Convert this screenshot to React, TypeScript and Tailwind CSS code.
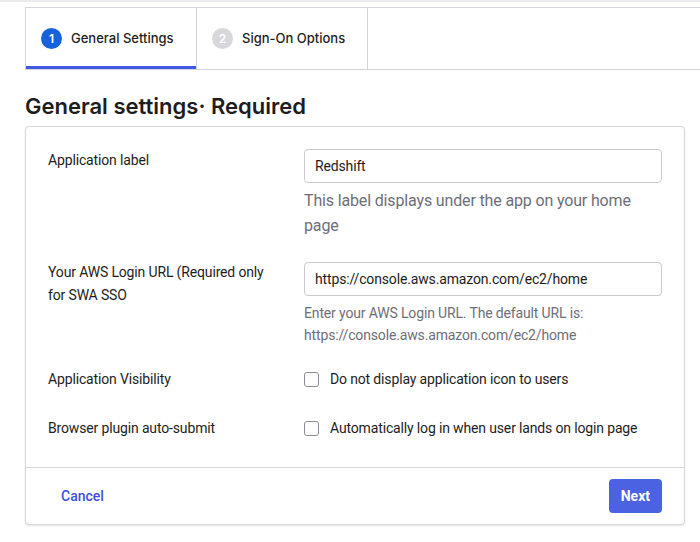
import React from 'react';

const inter = { fontFamily: 'Inter, "Noto Sans", sans-serif' };
const roboto = { fontFamily: 'Roboto, "Liberation Sans", sans-serif' };

const Tab: React.FC<{ n: number; label: string; active?: boolean }> = ({ n, label, active }) => (
  <div className="relative flex h-full w-[171px] items-center gap-[9px] border-r border-[#d4d4d8] pl-[15px]">
    <span
      className={
        active
          ? 'flex h-[21px] w-[21px] items-center justify-center rounded-full bg-[#1662dd] text-[12px] font-semibold text-white'
          : 'flex h-[21px] w-[21px] items-center justify-center rounded-full bg-[#d7d7dc] text-[12px] font-semibold text-white'
      }
    >
      {n}
    </span>
    <span className="text-[13px] font-medium text-[#1d1d21]">{label}</span>
    {active && <span className="absolute bottom-0 left-0 right-0 h-[3px] bg-[#3f59e4]" />}
  </div>
);

const Checkbox: React.FC = () => (
  <span className="block h-[15px] w-[15px] shrink-0 rounded-[3px] border border-[#8c8c96] bg-white" />
);

export default function App() {
  return (
    <div className="min-h-screen w-[700px] bg-white" style={inter}>
      <div className="h-[2px] bg-[#ebebed]" />

      {/* Tabs */}
      <div className="ml-[25px] mt-[5px] flex h-[63px] border-y border-l border-[#d4d4d8]">
        <Tab n={1} label="General Settings" active />
        <Tab n={2} label="Sign-On Options" />
      </div>

      <h1 className="ml-[25px] mt-[21px] text-[22px] font-semibold leading-[30px] text-[#1d1d21]">
        General settings· Required
      </h1>

      {/* Card */}
      <div
        className="ml-[25px] mt-[5px] w-[660px] rounded-[4px] border border-[#d7d7dc] bg-white shadow-[0_1px_2px_rgba(0,0,0,0.12)]"
        style={roboto}
      >
        <div className="px-[22px] pb-[27px] pt-[22px] text-[14px] tracking-[-0.15px] text-[#1d1d21]">
          {/* Application label */}
          <div className="flex">
            <div className="w-[256px] leading-[23px]">Application label</div>
            <div className="flex-1">
              <div className="flex h-[34px] items-center rounded-[4px] border border-[#c9c9cf] px-[10px] text-[14px]">
                Redshift
              </div>
              <p className="mt-[5px] text-[16px] leading-[25px] text-[#6e6e78]">
                This label displays under the app on your home page
              </p>
            </div>
          </div>

          {/* AWS URL */}
          <div className="mt-[24px] flex">
            <div className="-mt-[1px] w-[256px] pr-[20px] leading-[23px]">Your AWS Login URL (Required only for SWA SSO</div>
            <div className="flex-1">
              <div className="flex h-[34px] items-center rounded-[4px] border border-[#c9c9cf] px-[10px] text-[14px]">
                https://console.aws.amazon.com/ec2/home
              </div>
              <p className="mt-[6px] text-[14px] leading-[22px] text-[#6e6e78]">
                Enter your AWS Login URL. The default URL is:
                <br />
                https://console.aws.amazon.com/ec2/home
              </p>
            </div>
          </div>

          {/* Visibility */}
          <div className="mt-[22px] flex leading-[23px]">
            <div className="w-[256px]">Application Visibility</div>
            <label className="flex flex-1 items-center gap-[11px]">
              <Checkbox />
              <span>Do not display application icon to users</span>
            </label>
          </div>

          {/* Auto-submit */}
          <div className="mt-[26px] flex leading-[23px]">
            <div className="w-[256px]">Browser plugin auto-submit</div>
            <label className="flex flex-1 items-center gap-[11px]">
              <Checkbox />
              <span>Automatically log in when user lands on login page</span>
            </label>
          </div>
        </div>

        {/* Footer */}
        <div className="flex h-[57px] items-center justify-between border-t border-[#d7d7dc] pl-[35px] pr-[22px]">
          <button className="text-[14px] font-medium text-[#3f50d8]">Cancel</button>
          <button className="h-[34px] rounded-[4px] bg-[#4b63e2] px-[12px] text-[14px] font-bold text-white">
            Next
          </button>
        </div>
      </div>
    </div>
  );
}
